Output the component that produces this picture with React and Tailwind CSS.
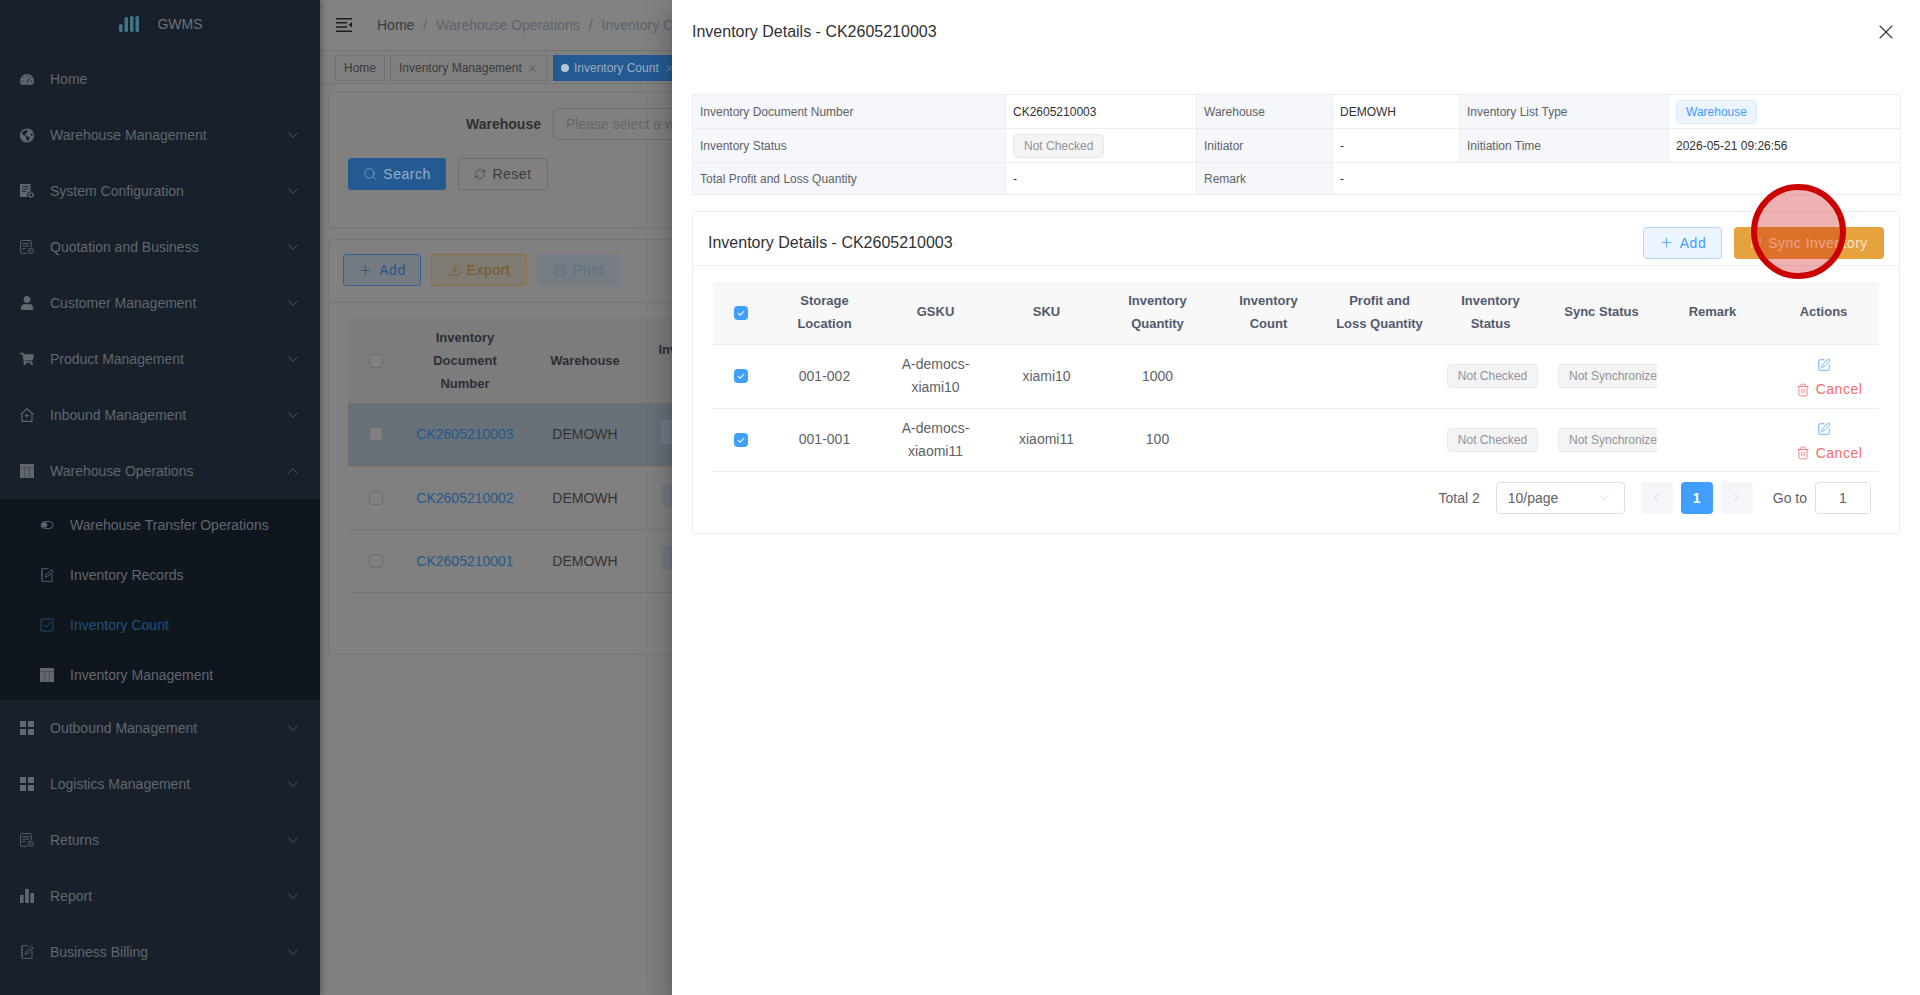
import { FaGlobeAmericas, FaShoppingCart, FaUser } from 'react-icons/fa'
import {
  ChevronDown,
  ChevronLeft,
  ChevronRight,
  ChevronUp,
  Download,
  Plus,
  Printer,
  RefreshCw,
  Search,
  SquarePen,
  Trash2,
  X,
} from 'lucide-react'

// Menu icons that the icon packages don't have
function GaugeIcon() {
  return (
    <svg viewBox="0 0 14 14" className="h-[14px] w-[14px]" fill="currentColor">
      <path d="M1.200 12.800A7 7 0 1 1 12.800 12.800z" />
      <path
        d="M7 3.200v1.600M3.200 5.200l1.100 1.100M10.800 5.200 9.700 6.300M1.800 9h1.500M10.700 9h1.500M7 10.800 8.800 6.300"
        stroke="#18202b"
        strokeWidth="1"
        fill="none"
      />
    </svg>
  )
}

function GearDocIcon() {
  return (
    <svg viewBox="0 0 14 14" className="h-[14px] w-[14px]" fill="currentColor">
      <path d="M0 0h10.500v7.600a3.400 3.400 0 0 0-2.900 5.400H0z" />
      <path d="M2 2.500h6.500M2 5h6.500M2 7.500h4" stroke="#18202b" strokeWidth=".9" />
      <circle cx="11" cy="11" r="2.100" fill="none" stroke="currentColor" strokeWidth="1.400" />
    </svg>
  )
}

function ClockDocIcon() {
  return (
    <svg viewBox="0 0 14 14" className="h-[14px] w-[14px]" fill="none" stroke="currentColor" strokeWidth=".9">
      <path d="M7 13.300H1.600a1 1 0 0 1-1-1V1.600a1 1 0 0 1 1-1h8.600a1 1 0 0 1 1 1v5.600" />
      <path d="M2.600 3.600h6.600M2.600 6h6.600M2.600 8.500h3" />
      <circle cx="10.700" cy="10.700" r="2.600" />
      <path d="M10.700 9.400v2.400" />
    </svg>
  )
}

function HouseIcon() {
  return (
    <svg viewBox="0 0 14 14" className="h-[14px] w-[14px]" fill="none" stroke="currentColor" strokeWidth="1.100">
      <path d="M.6 6.400 7 .8l6.400 5.600M2 5.400v8h10v-8" />
      <path d="M9.400 7.800H5.600M7 6.200 5.400 7.800 7 9.400" />
    </svg>
  )
}

function TableIcon() {
  return (
    <svg viewBox="0 0 14 14" className="h-[14px] w-[14px]" fill="currentColor">
      <path d="M0 0h14v14H0z" />
      <path d="M0 3.600h14M4.700 3.600V14M9.300 3.600V14" stroke="#3a3d40" strokeWidth=".6" />
    </svg>
  )
}

function GridIcon() {
  return (
    <svg viewBox="0 0 14 14" className="h-[14px] w-[14px]" fill="currentColor">
      <path d="M0 0h6v6H0zM8 0h6v6H8zM0 8h6v6H0zM8 8h6v6H8z" />
    </svg>
  )
}

function BarsIcon() {
  return (
    <svg viewBox="0 0 14 14" className="h-[14px] w-[14px]" fill="currentColor">
      <path d="M0 6h3.600v8H0zM5.200 0h3.600v14H5.200zM10.400 4H14v10h-3.600z" />
    </svg>
  )
}

function EditDocIcon() {
  return (
    <svg viewBox="0 0 14 14" className="h-[14px] w-[14px]" fill="none" stroke="currentColor" strokeWidth=".9">
      <path d="M8.400.7H2v12.600h10V5.600M1 3h2M1 5.500h2M1 8h2M1 10.500h2" />
      <path d="M5.200 9.400 6 7l5.400-5.600 1.600 1.600L7.600 8.600z" />
    </svg>
  )
}

function ToggleIcon() {
  return (
    <svg viewBox="0 0 14 14" className="h-[14px] w-[14px]" fill="none" stroke="currentColor" strokeWidth=".9">
      <rect x="1" y="3.500" width="12" height="7" rx="3.500" />
      <circle cx="4.500" cy="7" r="2.300" fill="currentColor" />
    </svg>
  )
}

function CheckDocIcon() {
  return (
    <svg viewBox="0 0 14 14" className="h-[14px] w-[14px]" fill="none" stroke="currentColor" strokeWidth=".9">
      <rect x="1" y="1" width="12" height="12" rx=".6" />
      <path d="m3.600 6.400 2.800 2.800 4.200-5" />
    </svg>
  )
}

function Logo() {
  return (
    <svg viewBox="0 0 20 16" className="h-4 w-5" fill="#3f7488">
      <rect x="0" y="8" width="3.500" height="8" rx="1.500" />
      <rect x="5.500" y="1" width="3.500" height="15" rx="1.500" />
      <rect x="11" y="0" width="3.500" height="16" rx="1.500" />
      <rect x="16.500" y="0" width="3.500" height="16" rx="1.500" />
    </svg>
  )
}

function HamburgerIcon() {
  return (
    <svg viewBox="0 0 16 14" className="h-[14px] w-4" fill="#1d1d1d">
      <path d="M0 0h16v1.500H0zM0 4h11v1.500H0zM0 8.300h11v1.500H0zM0 12.500h16V14H0z" />
      <path d="M16 4v5.500L12.500 6.800z" />
    </svg>
  )
}

const topMenu = [
  { label: 'Home', icon: <GaugeIcon />, noArrow: true },
  { label: 'Warehouse Management', icon: <FaGlobeAmericas size={15} /> },
  { label: 'System Configuration', icon: <GearDocIcon /> },
  { label: 'Quotation and Business', icon: <ClockDocIcon /> },
  { label: 'Customer Management', icon: <FaUser size={14} /> },
  { label: 'Product Management', icon: <FaShoppingCart size={14} /> },
  { label: 'Inbound Management', icon: <HouseIcon /> },
]

const subMenu = [
  { label: 'Warehouse Transfer Operations', icon: <ToggleIcon /> },
  { label: 'Inventory Records', icon: <EditDocIcon /> },
  { label: 'Inventory Count', icon: <CheckDocIcon />, active: true },
  { label: 'Inventory Management', icon: <TableIcon /> },
]

const bottomMenu = [
  { label: 'Outbound Management', icon: <GridIcon /> },
  { label: 'Logistics Management', icon: <GridIcon /> },
  { label: 'Returns', icon: <ClockDocIcon /> },
  { label: 'Report', icon: <BarsIcon /> },
  { label: 'Business Billing', icon: <EditDocIcon /> },
]

function MenuItem({ item, open }) {
  return (
    <div className="flex h-14 items-center pl-5 pr-[18px] text-sm text-[#61676f]">
      <span className="flex w-[14px] shrink-0 justify-center">{item.icon}</span>
      <span className="ml-4 flex-1">{item.label}</span>
      {!item.noArrow &&
        (open ? <ChevronUp size={18} strokeWidth={1} /> : <ChevronDown size={18} strokeWidth={1} />)}
    </div>
  )
}

function Sidebar() {
  return (
    <aside className="relative z-10 w-80 shrink-0 bg-[#18202b] shadow-[2px_0_6px_rgba(0,0,0,0.3)]">
      <div className="flex h-[51px] items-start justify-center pt-[16px]">
        <div className="flex items-center gap-[18px] pl-[2px]">
          <Logo />
          <span className="text-sm leading-4 font-medium text-[#6b7078]">GWMS</span>
        </div>
      </div>
      {topMenu.map((item) => (
        <MenuItem key={item.label} item={item} />
      ))}
      <MenuItem item={{ label: 'Warehouse Operations', icon: <TableIcon /> }} open />
      <div className="bg-[#0f161e] pt-px">
        {subMenu.map((item) => (
          <div
            key={item.label}
            className={`flex h-[50px] items-center pl-10 text-sm ${item.active ? 'text-[#20507f]' : 'text-[#61676f]'}`}
          >
            <span className="w-[14px] shrink-0">{item.icon}</span>
            <span className="ml-4">{item.label}</span>
          </div>
        ))}
      </div>
      {bottomMenu.map((item) => (
        <MenuItem key={item.label} item={item} />
      ))}
    </aside>
  )
}

const listRows = [
  { no: 'CK2605210003', selected: true },
  { no: 'CK2605210002' },
  { no: 'CK2605210001' },
]

function BackgroundPage() {
  return (
    <main className="min-w-0 flex-1 bg-[#808080]">
      <header className="flex h-[51px] items-center border-b border-[#747474] bg-[#828282] pl-4 text-sm text-[#3a3a3a]">
        <HamburgerIcon />
        <span className="ml-[25px]">Home</span>
        <span className="mx-[9px] text-[#5c6470]">/</span>
        <span className="text-[#5c6470]">Warehouse Operations</span>
        <span className="mx-[9px] text-[#5c6470]">/</span>
        <span className="text-[#5c6470]">Inventory Count</span>
      </header>

      <div className="flex h-[33px] items-start gap-[5px] border-b border-[#767676] pl-[15px] pt-1 text-xs text-[#3a3a3a]">
        <span className="flex h-[26px] w-[50px] items-center justify-center border border-[#717171]">Home</span>
        <span className="flex h-[26px] w-[157px] items-center border border-[#717171] pl-2">
          Inventory Management
          <X size={11} strokeWidth={1.3} className="ml-[5px]" />
        </span>
        <span className="ml-[1px] flex h-[26px] items-center bg-[#245a92] pl-2 pr-2 text-[#98adc4]">
          <span className="mr-[5px] h-2 w-2 rounded-full bg-[#b4c6d8]" />
          Inventory Count
          <X size={11} strokeWidth={1.3} className="ml-[5px]" />
        </span>
      </div>

      <div className="mx-2 mt-2 h-[137px] rounded border border-[#767676] pl-[19px] pt-[15px]">
        <div className="flex items-center">
          <label className="w-[205px] pr-3 text-right text-sm font-bold text-[#2f2f2f]">Warehouse</label>
          <span className="flex h-8 w-[215px] items-center rounded border border-[#707070] px-3 text-sm text-[#666]">
            Please select a warehouse
          </span>
        </div>
        <div className="mt-[18px] flex gap-3 tracking-[0.5px]">
          <button className="flex h-8 w-[98px] items-center justify-center gap-[6px] rounded-[3px] bg-[#245a92] text-sm text-[#98adc4]">
            <Search size={14} strokeWidth={1.2} />
            Search
          </button>
          <button className="flex h-8 w-[90px] items-center justify-center gap-[6px] rounded-[3px] border border-[#6e6e6e] text-sm text-[#3c3c3c]">
            <RefreshCw size={12} strokeWidth={1.3} />
            Reset
          </button>
        </div>
      </div>

      <div className="mx-2 mt-[10px] h-[416px] rounded border border-[#767676]">
        <div className="flex h-[63px] items-start gap-[10px] border-b border-[#747474] pl-[14px] pt-[14px] text-sm tracking-[0.5px]">
          <button className="flex h-8 w-[78px] items-center justify-center gap-[6px] rounded-[3px] border border-[#33628f] bg-[#747a81] text-[#24588c]">
            <Plus size={15} strokeWidth={1.4} />
            Add
          </button>
          <button className="flex h-8 w-[96px] items-center justify-center gap-[6px] rounded-[3px] border border-[#8f6f3a] bg-[#7f7a72] text-[#755a24]">
            <Download size={13} strokeWidth={1.4} />
            Export
          </button>
          <button className="flex h-8 w-[83px] items-center justify-center gap-[6px] rounded-[3px] border border-[#747c86] bg-[#767c84] text-[#5f7084]">
            <Printer size={14} strokeWidth={1.2} />
            Print
          </button>
        </div>

        <table className="ml-[19px] mt-[15px] w-[410px] table-fixed border-collapse text-center text-sm">
          <colgroup>
            <col className="w-14" />
            <col className="w-[122px]" />
            <col className="w-[118px]" />
            <col className="w-[114px]" />
          </colgroup>
          <thead>
            <tr className="h-[85px] bg-[#7c7c7c] text-[13px] leading-[23px] font-bold text-[#2c2f37]">
              <th className="font-bold">
                <span className="mx-auto block h-[14px] w-[14px] rounded-sm border border-[#6b6b6b] bg-[#808080]" />
              </th>
              <th className="px-6 font-bold">Inventory Document Number</th>
              <th className="font-bold">Warehouse</th>
              <th className="px-3 font-bold">Inventory List Type</th>
            </tr>
          </thead>
          <tbody className="text-[#343434]">
            {listRows.map((row) => (
              <tr key={row.no} className={`h-[63px] border-b border-[#747474] ${row.selected ? 'bg-[#687078]' : ''}`}>
                <td>
                  <span className="mx-auto block h-[14px] w-[14px] rounded-sm border border-[#6b6b6b] bg-[#808080]" />
                </td>
                <td className="text-[#24588c]">{row.no}</td>
                <td>DEMOWH</td>
                <td>
                  <span className="inline-block h-6 w-20 rounded border border-[#6f7b88] bg-[#737a83]" />
                </td>
              </tr>
            ))}
          </tbody>
        </table>
      </div>
    </main>
  )
}

function Tag({ children, tone = 'gray', className = '' }) {
  const tones = {
    gray: 'border-[#e9e9eb] bg-[#f4f4f5] text-[#909399] px-[10px]',
    blue: 'border-[#d9ecff] bg-[#ecf5ff] text-[#409eff] px-[9px]',
  }
  return (
    <span className={`inline-flex h-6 items-center whitespace-nowrap rounded border text-xs ${tones[tone]} ${className}`}>
      {children}
    </span>
  )
}

function Checked() {
  return (
    <span className="mx-auto flex h-[14px] w-[14px] items-center justify-center rounded-sm bg-[#409eff] text-white">
      <svg viewBox="0 0 14 14" className="h-[14px] w-[14px]" fill="none" stroke="currentColor" strokeWidth="1.100">
        <path d="m4 7.200 2.200 2.100L10 5" />
      </svg>
    </span>
  )
}

const labelCell = 'border border-[#ebeef5] bg-[#f5f7fa] px-[7px] text-[#606266]'
const valueCell = 'border border-[#ebeef5] px-[7px] text-[#303133]'

function InfoTable() {
  return (
    <table className="w-[1208px] table-fixed border-collapse text-left text-xs">
      <colgroup>
        <col className="w-[313px]" />
        <col className="w-[191px]" />
        <col className="w-[136px]" />
        <col className="w-[127px]" />
        <col className="w-[209px]" />
        <col className="w-[232px]" />
      </colgroup>
      <tbody>
        <tr className="h-[34px]">
          <td className={labelCell}>Inventory Document Number</td>
          <td className={valueCell}>CK2605210003</td>
          <td className={labelCell}>Warehouse</td>
          <td className={valueCell}>DEMOWH</td>
          <td className={labelCell}>Inventory List Type</td>
          <td className={valueCell}>
            <Tag tone="blue">Warehouse</Tag>
          </td>
        </tr>
        <tr className="h-[34px]">
          <td className={labelCell}>Inventory Status</td>
          <td className={valueCell}>
            <Tag>Not Checked</Tag>
          </td>
          <td className={labelCell}>Initiator</td>
          <td className={valueCell}>-</td>
          <td className={labelCell}>Initiation Time</td>
          <td className={valueCell}>2026-05-21 09:26:56</td>
        </tr>
        <tr className="h-8">
          <td className={labelCell}>Total Profit and Loss Quantity</td>
          <td className={valueCell}>-</td>
          <td className={labelCell}>Remark</td>
          <td className={valueCell} colSpan={3}>
            -
          </td>
        </tr>
      </tbody>
    </table>
  )
}

const columns = [
  'Storage Location',
  'GSKU',
  'SKU',
  'Inventory Quantity',
  'Inventory Count',
  'Profit and Loss Quantity',
  'Inventory Status',
  'Sync Status',
  'Remark',
  'Actions',
]

const detailRows = [
  { location: '001-002', gsku: 'A-democs-xiami10', sku: 'xiami10', qty: 1000, height: 'h-16' },
  { location: '001-001', gsku: 'A-democs-xiaomi11', sku: 'xiaomi11', qty: 100, height: 'h-[63px]' },
]

function DetailTable() {
  return (
    <table className="w-[1166px] table-fixed border-collapse text-center text-sm leading-[23px] text-[#606266]">
      <colgroup>
        <col className="w-14" />
        {columns.map((c) => (
          <col key={c} className="w-[111px]" />
        ))}
      </colgroup>
      <thead>
        <tr className="h-[62px] border-b border-[#ebeef5] bg-[#f8f8f9] text-[13px] text-[#515a6e]">
          <th>
            <Checked />
          </th>
          {columns.map((c) => (
            <th key={c} className="px-[11px] pb-[2px] font-bold">
              {c}
            </th>
          ))}
        </tr>
      </thead>
      <tbody>
        {detailRows.map((row) => (
          <tr key={row.location} className={`border-b border-[#ebeef5] ${row.height}`}>
            <td>
              <Checked />
            </td>
            <td>{row.location}</td>
            <td className="px-2">{row.gsku}</td>
            <td>{row.sku}</td>
            <td>{row.qty}</td>
            <td />
            <td />
            <td className="pl-1">
              <Tag>Not Checked</Tag>
            </td>
            <td className="pl-3">
              <div className="w-[99px] overflow-hidden">
                <Tag className="!pr-[30px]">Not Synchronized</Tag>
              </div>
            </td>
            <td />
            <td>
              <div className="flex flex-col items-center pt-[7px]">
                <SquarePen size={14} strokeWidth={1.4} className="text-[#409eff]" />
                <span className="mt-[6px] flex items-center gap-[6px] pl-[11px] tracking-[0.5px] text-[#f56c6c]">
                  <Trash2 size={14} strokeWidth={1.4} />
                  Cancel
                </span>
              </div>
            </td>
          </tr>
        ))}
      </tbody>
    </table>
  )
}

function Pagination() {
  return (
    <div className="mt-[10px] flex items-center justify-end pr-2 text-sm text-[#606266]">
      <span>Total 2</span>
      <span className="ml-4 flex h-8 w-[129px] items-center justify-between rounded border border-[#dcdfe6] pl-[11px] pr-3">
        10/page
        <ChevronDown size={15} strokeWidth={1} className="text-[#c0c4cc]" />
      </span>
      <span className="ml-4 flex h-8 w-8 items-center justify-center rounded-sm bg-[#f4f6f9] text-[#c0c4cc]">
        <ChevronLeft size={13} strokeWidth={1.2} />
      </span>
      <span className="ml-2 flex h-8 w-8 items-center justify-center rounded-sm bg-[#409eff] font-bold text-white">1</span>
      <span className="ml-2 flex h-8 w-8 items-center justify-center rounded-sm bg-[#f4f6f9] text-[#c0c4cc]">
        <ChevronRight size={13} strokeWidth={1.2} />
      </span>
      <span className="ml-5">Go to</span>
      <span className="ml-2 flex h-8 w-14 items-center justify-center rounded border border-[#dcdfe6]">1</span>
    </div>
  )
}

function Drawer() {
  return (
    <aside className="absolute inset-y-0 right-0 z-20 w-[1248px] bg-white px-5 shadow-[0_8px_10px_-5px_rgba(0,0,0,0.2),0_16px_24px_2px_rgba(0,0,0,0.14),0_6px_30px_5px_rgba(0,0,0,0.12)]">
      <div className="flex h-16 items-center justify-between text-[#303133]">
        <h2 className="text-base font-normal">Inventory Details - CK2605210003</h2>
        <X size={24} strokeWidth={1.1} className="mr-[2px]" />
      </div>
      <div className="mt-[30px]">
        <InfoTable />
      </div>
      <section className="mt-4 h-[323px] w-[1208px] rounded border border-[#ebeef5]">
        <div className="flex h-[54px] items-center justify-between border-b border-[#ebeef5] pl-[15px] pr-[15px] pt-2">
          <h3 className="text-base font-normal text-[#303133]">Inventory Details - CK2605210003</h3>
          <div className="flex gap-3 text-sm tracking-[0.5px]">
            <button className="flex h-8 w-[79px] items-center justify-center gap-[6px] rounded border border-[#b3d8ff] bg-[#ecf5ff] text-[#409eff]">
              <Plus size={15} strokeWidth={1.3} />
              Add
            </button>
            <button className="flex h-8 w-[150px] items-center justify-center gap-[6px] rounded bg-[#e6a23c] text-[#f9e7cd]">
              <RefreshCw size={12} strokeWidth={1.3} />
              Sync Inventory
            </button>
          </div>
        </div>
        <div className="mx-5 mt-4">
          <DetailTable />
          <Pagination />
        </div>
      </section>
    </aside>
  )
}

export default function App() {
  return (
    <div className="relative flex h-screen overflow-hidden font-['Liberation_Sans',Arial,sans-serif]">
      <Sidebar />
      <BackgroundPage />
      <Drawer />
      {/* click marker from the recording, sits over the Sync Inventory button */}
      <div className="absolute left-[1751px] top-[184px] z-30 h-[95px] w-[95px] rounded-full border-[6px] border-[#cc0000] bg-[#cc0000]/30" />
    </div>
  )
}
